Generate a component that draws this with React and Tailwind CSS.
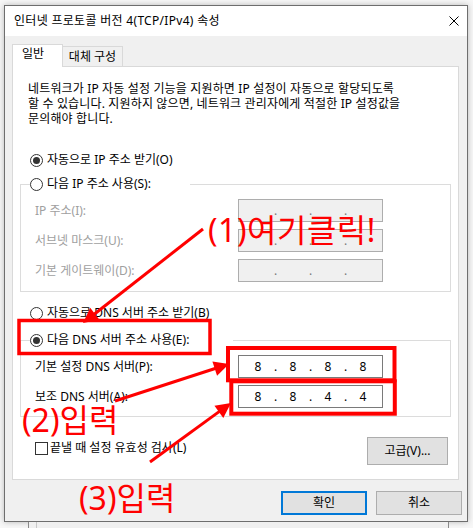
import React from 'react'

const KR = "font-['Noto_Sans','Noto_Sans_CJK_KR',sans-serif]"

function Radio({ checked }) {
  return (
    <span className="flex h-[13px] w-[13px] shrink-0 items-center justify-center rounded-full border border-[#333333] bg-white">
      {checked && <span className="h-[7px] w-[7px] rounded-full bg-[#333333]" />}
    </span>
  )
}

function IpBox({ parts, disabled }) {
  return (
    <div
      className={
        disabled
          ? 'flex h-[23px] w-[145px] items-center border border-[#adadad] bg-[#f0f0f0] pl-[7px] text-[12px] text-[#7a7a7a]'
          : 'flex h-[23px] w-[145px] items-center border border-[#7a7a7a] bg-white pl-[7px] text-[12px] text-black'
      }
    >
      {parts.map((p, i) => (
        <React.Fragment key={i}>
          <span className="w-[24px] text-center">{p}</span>
          {i < 3 && <span className="w-[11px] text-center">.</span>}
        </React.Fragment>
      ))}
    </div>
  )
}

function Row({ label, parts, disabled }) {
  return (
    <div className="flex items-center">
      <span className={disabled ? 'w-[203px] text-[12px] text-[#a0a0a0]' : 'w-[203px] text-[12px] text-black'}>
        {label}
      </span>
      <IpBox parts={parts} disabled={disabled} />
    </div>
  )
}

function Arrow({ x1, y1, x2, y2 }) {
  const dx = x2 - x1
  const dy = y2 - y1
  const len = Math.hypot(dx, dy)
  const ux = dx / len
  const uy = dy / len
  const L = 15
  const W = 7.5
  const bx = x2 - ux * L
  const by = y2 - uy * L
  const pts = `${x2},${y2} ${bx - uy * W},${by + ux * W} ${bx + uy * W},${by - ux * W}`
  return (
    <g>
      <line x1={x1} y1={y1} x2={bx + ux * 2} y2={by + uy * 2} stroke="#ff0000" strokeWidth="3" />
      <polygon points={pts} fill="#ff0000" />
    </g>
  )
}

export default function App() {
  return (
    <div className={`relative h-[528px] w-[473px] overflow-hidden bg-[#f7f7f7] pl-[4px] pt-[5px] ${KR}`}>
      {/* WINDOW */}
      <div className="flex h-[517px] w-[464px] flex-col border border-[#6e6e6e] bg-[#f0f0f0] shadow-[0_0_6px_rgba(0,0,0,0.25)]">
        {/* TITLE BAR */}
        <div className="flex h-[30px] shrink-0 items-center justify-between bg-white pl-[9px] pr-[8px] text-[12px] text-black">
          <span className="tracking-[0.3px]">인터넷 프로토콜 버전 4(TCP/IPv4) 속성</span>
          <svg width="10" height="10" viewBox="0 0 10 10">
            <path d="M0.5 0.5 L9.5 9.5 M9.5 0.5 L0.5 9.5" stroke="#000" strokeWidth="1" />
          </svg>
        </div>

        {/* BODY */}
        <div className="flex flex-col pl-[7px] pt-[8px]">
          {/* TABS */}
          <div className="flex h-[22px] items-end text-[12px]">
            <div className="relative z-10 -mb-px flex h-[23px] w-[51px] items-start border border-b-0 border-[#d9d9d9] bg-white pl-[9px]">
              일반
            </div>
            <div className="flex h-[20px] w-[60px] items-center justify-center border border-b-0 border-l-0 border-[#d9d9d9] bg-[#f0f0f0]">
              대체 구성
            </div>
          </div>

          {/* PANEL */}
          <div className="flex h-[414px] w-[447px] flex-col border border-[#d9d9d9] bg-white text-[12px] text-black">
            <p className="mt-[14px] pl-[15px] leading-[15px] tracking-[0.15px] whitespace-nowrap">
              네트워크가 IP 자동 설정 기능을 지원하면 IP 설정이 자동으로 할당되도록
              <br />
              할 수 있습니다. 지원하지 않으면, 네트워크 관리자에게 적절한 IP 설정값을
              <br />
              문의해야 합니다.
            </p>

            <div className="mt-[26px] flex h-[16px] items-center gap-[4px] pl-[17px]">
              <Radio checked />
              <span>자동으로 IP 주소 받기(O)</span>
            </div>

            <fieldset className="mx-[7px] mt-[8px] border border-[#dcdcdc] pb-[9px] pl-[9px]">
              <legend className="flex h-[16px] w-[160px] items-center gap-[4px]">
                <Radio />
                <span>다음 IP 주소 사용(S):</span>
              </legend>
              <div className="flex flex-col gap-[7px] pl-[5px] pt-[7px]">
                <Row label="IP 주소(I):" parts={['', '', '', '']} disabled />
                <Row label="서브넷 마스크(U):" parts={['', '', '', '']} disabled />
                <Row label="기본 게이트웨이(D):" parts={['', '', '', '']} disabled />
              </div>
            </fieldset>

            <div className="mt-[13px] flex h-[16px] items-center gap-[4px] pl-[17px]">
              <Radio />
              <span>자동으로 DNS 서버 주소 받기(B)</span>
            </div>

            <fieldset className="mx-[7px] mt-[11px] border border-[#dcdcdc] pb-[8px] pl-[9px]">
              <legend className="flex h-[16px] w-[203px] items-center gap-[4px]">
                <Radio checked />
                <span>다음 DNS 서버 주소 사용(E):</span>
              </legend>
              <div className="flex flex-col gap-[7px] pl-[5px] pt-[7px]">
                <Row label="기본 설정 DNS 서버(P):" parts={['8', '8', '8', '8']} />
                <Row label="보조 DNS 서버(A):" parts={['8', '8', '4', '4']} />
              </div>
            </fieldset>

            <div className="mt-[20px] flex items-start justify-between pl-[22px] pr-[10px]">
              <div className="mt-[2px] flex items-center gap-[2px]">
                <span className="h-[13px] w-[13px] border border-[#333333] bg-white" />
                <span>끝낼 때 설정 유효성 검사(L)</span>
              </div>
              <button className="h-[28px] w-[81px] border border-[#adadad] bg-[#e1e1e1] text-[12px]">
                고급(V)...
              </button>
            </div>
          </div>

          {/* BUTTONS */}
          <div className="mt-[11px] flex justify-end gap-[9px] pr-[5px] text-[12px]">
            <button className="h-[24px] w-[86px] border-2 border-[#0078d7] bg-[#e1e1e1]">확인</button>
            <button className="h-[24px] w-[86px] border border-[#adadad] bg-[#e1e1e1]">취소</button>
          </div>
        </div>
      </div>

      {/* WINDOW BEHIND */}
      <div className="ml-[24px] h-[6px] w-[421px] border-x border-[#8a8a8a] bg-[#f0f0f0] pl-[7px]">
        <div className="h-full border-l border-[#c8c8c8]" />
      </div>

      {/* ANNOTATIONS */}
      <svg className="pointer-events-none absolute left-0 top-0" width="473" height="528" viewBox="0 0 473 528">
        <rect x="19" y="320.5" width="191" height="33" fill="none" stroke="#ff0000" strokeWidth="3.5" />
        <rect x="228" y="348" width="166.5" height="32.3" fill="none" stroke="#ff0000" strokeWidth="4" />
        <rect x="231.3" y="381.3" width="163.5" height="32.4" fill="none" stroke="#ff0000" strokeWidth="4" />
        <Arrow x1={203} y1={229} x2={83} y2={323} />
        <Arrow x1={115} y1={401} x2={229} y2={364} />
        <Arrow x1={150} y1={462} x2={231} y2={403} />
      </svg>
      <div className="absolute left-[208px] top-[214px] text-[32px] leading-none tracking-[0.5px] text-[#ff0000]">(1)여기클릭!</div>
      <div className="absolute left-[22px] top-[404px] text-[32px] leading-none text-[#ff0000]">(2)입력</div>
      <div className="absolute left-[79px] top-[482px] text-[32px] leading-none text-[#ff0000]">(3)입력</div>
    </div>
  )
}
